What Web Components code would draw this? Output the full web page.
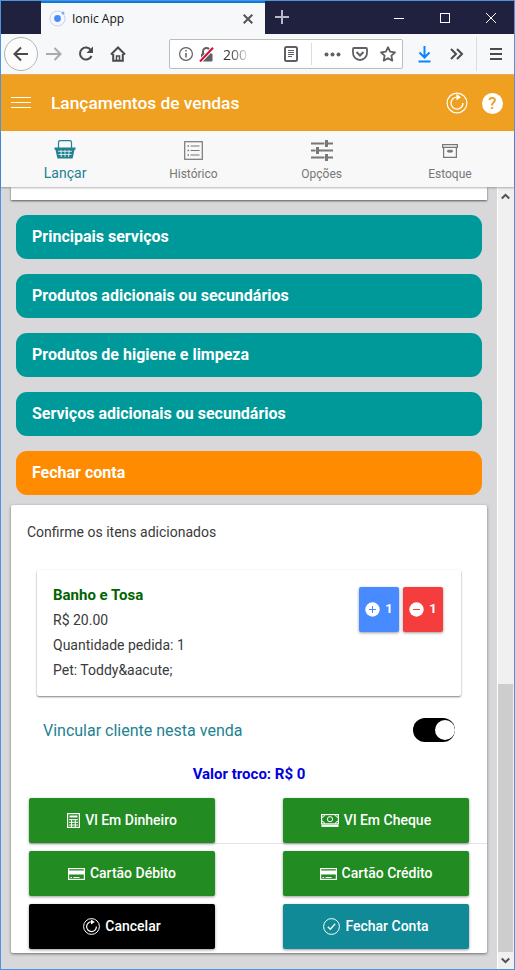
<!DOCTYPE html>
<html lang="pt-br">
<head>
<meta charset="utf-8">
<title>Ionic App</title>
<style>
  html, body { margin: 0; height: 100%; }
  body { font-family: Roboto, "Liberation Sans", sans-serif; font-size: 14px; color: #3a3a3a; overflow: hidden; }
</style>
</head>
<body>
<app-window>
  <browser-chrome slot="chrome"></browser-chrome>
  <app-header slot="header" title-text="Lançamentos de vendas"></app-header>
  <app-tabs slot="tabs"></app-tabs>
  <sale-accordion>Principais serviços</sale-accordion>
  <sale-accordion>Produtos adicionais ou secundários</sale-accordion>
  <sale-accordion>Produtos de higiene e limpeza</sale-accordion>
  <sale-accordion>Serviços adicionais ou secundários</sale-accordion>
  <sale-accordion style="--bar: #ff8c00">Fechar conta</sale-accordion>
  <checkout-card></checkout-card>
</app-window>

<script>
// name: [width, height, shapes]
const ICONS = {
  back: [16, 16, '<path d="M15 8H1.5M8 1.500 1.500 8 8 14.500" stroke-width="2"/>'],
  forward: [16, 14, '<path d="M0 7h14.500M8.500 1l6 6-6 6" stroke-width="2"/>'],
  reload: [16, 16, '<path d="M13 4.200A6 6 0 1 0 13.500 10" stroke-width="2"/><path d="M15 .5V7H8.500z" fill="currentColor" stroke="none"/>'],
  home: [16, 16, '<path d="M1 8.500 8 1.500l7 7M3.200 8v6.800h9.600V8" stroke-width="2"/><path d="M6.500 15v-5h3v5" stroke-width="1.500"/>'],
  info: [14, 14, '<circle cx="7" cy="7" r="6.400" stroke-width="1.200"/><path d="M7 6v4.500M7 3v1.500" stroke-width="1.500"/>'],
  lock: [15, 15, '<path d="M4 7V4.500a3.500 3.500 0 0 1 7 0V7" stroke-width="2"/><rect x="2" y="6.500" width="11.500" height="8" rx="1" fill="currentColor" stroke="none"/><path d="M1 14.500 14 .8" stroke="#fff" stroke-width="4"/><path d="M1 14.500 14 .8" stroke="#d70a3c" stroke-width="2"/>'],
  reader: [14, 16, '<rect x="1" y="1" width="12" height="14" rx="1.500" stroke-width="2"/><path d="M4 4.500h6M4 6.500h6M4 8.500h6M4 10.500h4"/>'],
  dots: [17, 5, '<g fill="currentColor" stroke="none"><circle cx="2.500" cy="2.500" r="2"/><circle cx="8.500" cy="2.500" r="2"/><circle cx="14.500" cy="2.500" r="2"/></g>'],
  pocket: [16, 14, '<path d="M2 1h12a1 1 0 0 1 1 1v4a7 7 0 0 1-14 0V2a1 1 0 0 1 1-1z" stroke-width="1.800"/><path d="M4.500 5 8 8.500 11.500 5" stroke-width="2"/>'],
  star: [16, 16, '<path d="M8 1.200l2.100 4.500 4.900.6-3.600 3.400.9 4.900L8 12.200l-4.300 2.400.9-4.900L1 6.300l4.900-.6z" stroke-width="1.800" stroke-linejoin="round"/>'],
  download: [13, 17, '<path d="M6.500 0v11M1.500 6.500l5 5 5-5M.5 15.500h12" stroke-width="2"/>'],
  more: [14, 12, '<path d="M1 1l5 5-5 5M7 1l5 5-5 5" stroke-width="2"/>'],
  burger: [12, 12, '<path d="M0 1h12M0 6h12M0 11h12" stroke-width="2"/>'],
  plus: [14, 14, '<path d="M7 0v14M0 7h14" stroke-width="2"/>'],
  tabclose: [10, 10, '<path d="M.7.7l8.600 8.600M9.300.7.7 9.300" stroke-width="2"/>'],
  min: [10, 10, '<path d="M0 5.500h10"/>'],
  max: [10, 10, '<rect x=".5" y=".5" width="9" height="9"/>'],
  close: [10, 10, '<path d="M0 0l10 10M10 0 0 10"/>'],
  ionic: [17, 17, '<circle cx="8.500" cy="8.500" r="7.500" stroke="#bdd2fb"/><circle cx="8.500" cy="8.500" r="3.400" fill="#4a8bfc" stroke="none"/><circle cx="14" cy="3" r="1.500" fill="#7eaafb" stroke="none"/>'],
  menu: [20, 12, '<path d="M0 .5h20M0 5.500h20M0 10.500h20"/>'],
  refresh: [22, 22, '<circle cx="11" cy="11" r="9.900" stroke-width="1.200"/><path d="M11.500 5.100A6 6 0 1 0 17 11" stroke-width="1.400"/><path d="M10.500 1.800 14.800 5.200 10.500 8.300z" fill="currentColor" stroke="none"/>'],
  basket: [22, 19, '<path d="M4.500 8V2.500A1.800 1.800 0 0 1 6.300.7h9.400a1.800 1.800 0 0 1 1.800 1.800V8" stroke-width="1.200"/><path d="M.5 7.500h21v2.300h-1L18.600 18.500H3.400L1.500 9.800h-1z" fill="currentColor" stroke="none"/><path d="M4 11.300h14M4.500 14.500h13M6.900 10l.5 7M11 10v7M15.100 10l-.5 7" stroke="#f8f8f8" stroke-width=".8"/>'],
  list: [19, 19, '<rect x=".7" y=".7" width="17.600" height="17.600" stroke-width="1.200"/><path d="M6.500 5h9M6.500 9.500h9M6.500 14h9"/><path d="M3.500 5H5M3.500 9.500H5M3.500 14H5" stroke-width="1.700"/>'],
  options: [22, 21, '<path d="M0 3.500h13.500M17 3.500h5M0 10.500h4.500M8 10.500h14M0 17.500h13.500M17 17.500h5" stroke-width="2"/><path d="M15.500 0v7M6.500 7v7M15.500 14v7" stroke-width="3"/>'],
  archive: [16, 14, '<path d="M.6.6h14.800v2.800H.6zM1.600 3.400v10h12.800v-10" stroke-width="1.200"/><rect x="5.500" y="6.300" width="5" height="1.800" rx=".8" fill="currentColor"/>'],
  add: [15, 15, '<circle cx="7.500" cy="7.500" r="7.200" fill="currentColor" stroke="none"/><path d="M7.500 4v7M4 7.500h7" stroke="var(--knock)"/>'],
  remove: [15, 15, '<circle cx="7.500" cy="7.500" r="7.200" fill="currentColor" stroke="none"/><path d="M4 7.500h7" stroke="var(--knock)"/>'],
  calculator: [13, 15, '<rect x=".6" y=".6" width="11.800" height="13.800" stroke-width="1.200"/><rect x="2.500" y="2.500" width="8" height="2" fill="currentColor" stroke="none"/><path d="M2 6.700h9M2 9.300h9M2 12h9M4.600 6v8M8.300 6v8" stroke-width="1"/>'],
  cash: [18, 13, '<rect x=".6" y=".6" width="16.800" height="9.300" stroke-width="1.200"/><circle cx="9" cy="5.200" r="2.600"/><path d="M1 3.300Q3.300 3.300 3.500 1M17 3.300Q14.700 3.300 14.500 1M1 7.200q2.300 0 2.500 2.600M17 7.200q-2.300 0-2.500 2.600"/><path d="M.5 11.800h17" stroke-width="2.200"/>'],
  card: [17, 12, '<rect x=".6" y=".6" width="15.800" height="10.800" stroke-width="1.200"/><path d="M0 4.500h17" stroke-width="4"/><path d="M2.500 9.500h1.500M5.500 9.500h6"/>'],
  cycle: [17, 17, '<circle cx="8.500" cy="8.500" r="7.900"/><path d="M9 3.800A4.900 4.900 0 1 0 13.400 8.500" stroke-width="1.200"/><path d="M8 1.400 11.800 4 8 6.500z" fill="currentColor" stroke="none"/>'],
  check: [17, 17, '<circle cx="8.500" cy="8.500" r="7.900"/><path d="M4.800 8.800 7.300 11.200 12.200 5.800" stroke-width="1.300"/>'],
  up: [9, 7, '<path d="M.8 5.500 4.500 1.800l3.700 3.700" stroke-width="2"/>'],
  down: [9, 7, '<path d="M.8 1.500l3.700 3.700 3.700-3.700" stroke-width="2"/>']
};

class UiIcon extends HTMLElement {
  constructor() {
    super();
    this.attachShadow({ mode: 'open' });
  }

  connectedCallback() {
    const [w, h, shapes] = ICONS[this.getAttribute('name')];
    this.shadowRoot.innerHTML = /* html */ `
    <style>
      :host { display: block; flex: none; width: ${w}px; height: ${h}px; }
      svg { display: block; }
    </style>
    <svg width="${w}" height="${h}" viewBox="0 0 ${w} ${h}" fill="none" stroke="currentColor">${shapes}</svg>`;
  }
}

class BrowserChrome extends HTMLElement {
  constructor() {
    super();
    this.attachShadow({ mode: 'open' });
  }

  static get styles() {
    return /* css */ `
      :host { display: block; color: #4a4a4f; }
      .titlebar { display: flex; height: 33px; background: #20213f; color: #fff; }
      .tab {
        display: flex;
        align-items: center;
        box-sizing: border-box;
        width: 224px;
        margin-left: 40px;
        padding: 0 12px 0 8px;
        border-top: 2px solid #1479dc;
        background: #f7f8f9;
        color: #111;
        font: 12px "Open Sans", "Noto Sans", sans-serif;
      }
      .tab span { margin: 0 auto 0 6px; }
      .tab ui-icon:last-child { color: #555; }
      .new { margin: 9px 0 0 10px; color: #b9b9c6; }
      .controls { display: flex; gap: 36px; margin: 12px 18px 0 auto; }
      .toolbar {
        display: flex;
        align-items: center;
        box-sizing: border-box;
        height: 41px;
        padding-left: 3px;
        background: #f7f8f9;
        border-bottom: 1px solid #e5ab62;
      }
      .back {
        display: grid;
        place-items: center;
        box-sizing: border-box;
        width: 34px;
        height: 34px;
        border: 1px solid #b4b4b6;
        border-radius: 50%;
        background: #fcfcfc;
      }
      .url {
        display: flex;
        align-items: center;
        box-sizing: border-box;
        width: 234px;
        height: 30px;
        margin-left: 43px;
        padding: 0 6px 0 9px;
        border: 1px solid #bcbcbf;
        border-radius: 2px;
        background: #fff;
        color: #606064;
      }
      .host {
        width: 26px;
        margin: 0 auto 0 9px;
        overflow: hidden;
        font: 14px "Open Sans", "Noto Sans", sans-serif;
        background: linear-gradient(90deg, #333 25%, #eee);
        -webkit-background-clip: text;
        color: transparent;
      }
      .sep { width: 1px; height: 22px; background: #dcdcdd; }
    `;
  }

  connectedCallback() {
    this.shadowRoot.innerHTML = /* html */ `
    <style>${BrowserChrome.styles}</style>
    <div class="titlebar">
      <div class="tab">
        <ui-icon name="ionic"></ui-icon><span>Ionic App</span><ui-icon name="tabclose"></ui-icon>
      </div>
      <ui-icon class="new" name="plus"></ui-icon>
      <div class="controls">
        <ui-icon name="min"></ui-icon><ui-icon name="max"></ui-icon><ui-icon name="close"></ui-icon>
      </div>
    </div>
    <div class="toolbar">
      <div class="back"><ui-icon name="back"></ui-icon></div>
      <ui-icon name="forward" style="margin-left:8px;color:#aaaaad"></ui-icon>
      <ui-icon name="reload" style="margin-left:16px"></ui-icon>
      <ui-icon name="home" style="margin-left:16px"></ui-icon>
      <div class="url">
        <ui-icon name="info"></ui-icon>
        <ui-icon name="lock" style="margin-left:6px"></ui-icon>
        <span class="host">200</span>
        <ui-icon name="reader"></ui-icon>
        <div class="sep" style="margin:0 12px 0 13px"></div>
        <ui-icon name="dots"></ui-icon>
        <ui-icon name="pocket" style="margin:0 12px 0 11px"></ui-icon>
        <ui-icon name="star"></ui-icon>
      </div>
      <ui-icon name="download" style="margin-left:15px;color:#0a84ff"></ui-icon>
      <ui-icon name="more" style="margin-left:19px"></ui-icon>
      <div class="sep" style="height:34px;margin:0 13px 0 12px"></div>
      <ui-icon name="burger"></ui-icon>
    </div>`;
  }
}

class AppHeader extends HTMLElement {
  constructor() {
    super();
    this.attachShadow({ mode: 'open' });
  }

  static get styles() {
    return /* css */ `
      :host {
        display: flex;
        align-items: center;
        height: 56px;
        padding: 0 11px 0 10px;
        background: #f0a020;
        color: #fff;
      }
      h1 { flex: 1; margin: 0 0 0 20px; font-size: 17.35px; font-weight: 500; }
      .help {
        display: grid;
        place-items: center;
        width: 21px;
        height: 21px;
        margin-left: 14px;
        border-radius: 50%;
        background: #fff;
        color: #f0a020;
        font-size: 17px;
        font-weight: 500;
      }
    `;
  }

  connectedCallback() {
    this.shadowRoot.innerHTML = /* html */ `
    <style>${AppHeader.styles}</style>
    <ui-icon name="menu"></ui-icon>
    <h1>${this.getAttribute('title-text')}</h1>
    <ui-icon name="refresh"></ui-icon>
    <div class="help">?</div>`;
  }
}

class AppTabs extends HTMLElement {
  constructor() {
    super();
    this.attachShadow({ mode: 'open' });
    this.items = [
      { icon: 'basket', label: 'Lançar', active: true },
      { icon: 'list', label: 'Histórico' },
      { icon: 'options', label: 'Opções' },
      { icon: 'archive', label: 'Estoque' }
    ];
  }

  static get styles() {
    return /* css */ `
      :host {
        display: flex;
        box-sizing: border-box;
        height: 56px;
        background: #f8f8f8;
        box-shadow: 0 1px 2px rgba(0, 0, 0, 0.3);
        color: #777;
        font-size: 12px;
      }
      .tab { flex: 1; display: flex; flex-direction: column; align-items: center; }
      .icon { display: flex; align-items: center; height: 35px; padding-top: 4px; box-sizing: border-box; }
      .label { line-height: 16px; }
      .active { color: #218291; font-size: 14px; }
      .active .icon { padding-top: 1px; }
      .active .label { margin-top: -1px; }
    `;
  }

  connectedCallback() {
    this.shadowRoot.innerHTML = /* html */ `
    <style>${AppTabs.styles}</style>
    ${this.items.map((item) => `
    <div class="tab ${item.active ? 'active' : ''}">
      <div class="icon"><ui-icon name="${item.icon}"></ui-icon></div>
      <div class="label">${item.label}</div>
    </div>`).join('')}`;
  }
}

class SaleAccordion extends HTMLElement {
  constructor() {
    super();
    this.attachShadow({ mode: 'open' });
  }

  connectedCallback() {
    this.shadowRoot.innerHTML = /* html */ `
    <style>
      :host {
        display: block;
        height: 44px;
        margin: 0 15px 15px;
        padding-left: 16px;
        box-sizing: border-box;
        border-radius: 11px;
        background: var(--bar, #009999);
        color: #fff;
        font-size: 16px;
        font-weight: 700;
        line-height: 43px;
      }
    </style>
    <slot></slot>`;
  }
}

class AppButton extends HTMLElement {
  constructor() {
    super();
    this.attachShadow({ mode: 'open' });
  }

  connectedCallback() {
    this.shadowRoot.innerHTML = /* html */ `
    <style>
      :host {
        display: flex;
        align-items: center;
        justify-content: center;
        gap: 5px;
        height: 45px;
        border-radius: 2px;
        background: var(--fill, #228b22);
        box-shadow: 0 1px 3px rgba(0, 0, 0, 0.4);
        color: #fff;
        --knock: var(--fill);
        font-size: 14px;
        font-weight: 500;
      }
      span { padding-bottom: 2px; }
    </style>
    <ui-icon name="${this.getAttribute('icon')}"></ui-icon>
    <span><slot></slot></span>`;
  }
}

class CheckoutCard extends HTMLElement {
  constructor() {
    super();
    this.attachShadow({ mode: 'open' });
  }

  static get styles() {
    return /* css */ `
      :host {
        display: block;
        box-sizing: border-box;
        width: 476px;
        height: 448px;
        margin: -5px 0 0 10px;
        background: #fff;
        border-radius: 2px;
        box-shadow: 0 1px 3px rgba(0, 0, 0, 0.5);
      }
      p { margin: 0; }
      .intro { padding: 17px 16px 0; line-height: 20px; }
      .item {
        display: flex;
        justify-content: space-between;
        box-sizing: border-box;
        width: 424px;
        height: 126px;
        margin: 28px 0 0 26px;
        padding: 13px 18px 0 16px;
        border-radius: 2px;
        box-shadow: 0 1px 2px rgba(0, 0, 0, 0.5);
        line-height: 25px;
      }
      .name { color: #006400; font-size: 15px; font-weight: 700; }
      .qty { display: flex; gap: 4px; padding-top: 4px; }
      .qty app-button { width: 40px; font-size: 13px; font-weight: 700; }
      .client {
        display: flex;
        align-items: center;
        justify-content: space-between;
        height: 24px;
        margin-top: 22px;
        padding: 0 32px;
        color: #218291;
        font-size: 16px;
      }
      .toggle { display: flex; justify-content: flex-end; width: 42px; height: 24px; border-radius: 12px; background: #000; }
      .knob { width: 20px; height: 20px; margin: 2px .5px; border-radius: 50%; background: #fff; }
      .change { margin: 22px 0 14px; text-align: center; color: #0000dd; font-size: 15px; font-weight: 700; line-height: 20px; }
      .row { display: flex; justify-content: space-between; height: 45px; margin: 0 0 7px 18px; padding-right: 18px; border-bottom: 1px solid transparent; }
      .row.line { border-color: #e4e4e6; }
      .row app-button { width: 186px; }
    `;
  }

  connectedCallback() {
    this.shadowRoot.innerHTML = /* html */ `
    <style>${CheckoutCard.styles}</style>
    <p class="intro">Confirme os itens adicionados</p>
    <div class="item">
      <div>
        <p class="name">Banho e Tosa</p>
        <p>R$ 20.00</p>
        <p>Quantidade pedida: 1</p>
        <p>Pet: Toddy&amp;aacute;</p>
      </div>
      <div class="qty">
        <app-button icon="add" style="--fill:#488aff">1</app-button>
        <app-button icon="remove" style="--fill:#f53d3d">1</app-button>
      </div>
    </div>
    <div class="client">
      <span>Vincular cliente nesta venda</span>
      <div class="toggle"><div class="knob"></div></div>
    </div>
    <p class="change">Valor troco: R$ 0</p>
    <div class="row line">
      <app-button icon="calculator">Vl Em Dinheiro</app-button>
      <app-button icon="cash">Vl Em Cheque</app-button>
    </div>
    <div class="row">
      <app-button icon="card">Cartão Débito</app-button>
      <app-button icon="card">Cartão Crédito</app-button>
    </div>
    <div class="row">
      <app-button icon="cycle" style="--fill:#000">Cancelar</app-button>
      <app-button icon="check" style="--fill:#118a98">Fechar Conta</app-button>
    </div>`;
  }
}

class AppWindow extends HTMLElement {
  constructor() {
    super();
    this.attachShadow({ mode: 'open' });
  }

  static get styles() {
    return /* css */ `
      :host {
        display: flex;
        flex-direction: column;
        box-sizing: border-box;
        width: 515px;
        height: 970px;
        border: 1px solid #4a94e0;
      }
      .tabs { position: relative; z-index: 1; }
      .body { flex: 1; display: flex; min-height: 0; background: #d8d8da; }
      .content { flex: 1; overflow: hidden; }
      .previous {
        width: 476px;
        height: 13px;
        margin: 0 0 15px 10px;
        background: #fff;
        box-shadow: 0 1px 2px rgba(0, 0, 0, 0.6);
      }
      .scrollbar {
        display: flex;
        flex-direction: column;
        align-items: center;
        justify-content: space-between;
        width: 17px;
        padding: 6px 0 5px;
        box-sizing: border-box;
        border-left: 1px solid #fff;
        border-right: 1px solid #f0f0f0;
        background: linear-gradient(#cdcdcd, #cdcdcd) 0 497px / 100% 268px no-repeat #f0f0f0;
        color: #505050;
      }
    `;
  }

  connectedCallback() {
    this.shadowRoot.innerHTML = /* html */ `
    <style>${AppWindow.styles}</style>
    <slot name="chrome"></slot>
    <slot name="header"></slot>
    <div class="tabs"><slot name="tabs"></slot></div>
    <div class="body">
      <div class="content">
        <div class="previous"></div>
        <slot></slot>
      </div>
      <div class="scrollbar"><ui-icon name="up"></ui-icon><ui-icon name="down"></ui-icon></div>
    </div>`;
  }
}

customElements.define('ui-icon', UiIcon);
customElements.define('app-button', AppButton);
customElements.define('browser-chrome', BrowserChrome);
customElements.define('app-header', AppHeader);
customElements.define('app-tabs', AppTabs);
customElements.define('sale-accordion', SaleAccordion);
customElements.define('checkout-card', CheckoutCard);
customElements.define('app-window', AppWindow);
</script>
</body>
</html>
